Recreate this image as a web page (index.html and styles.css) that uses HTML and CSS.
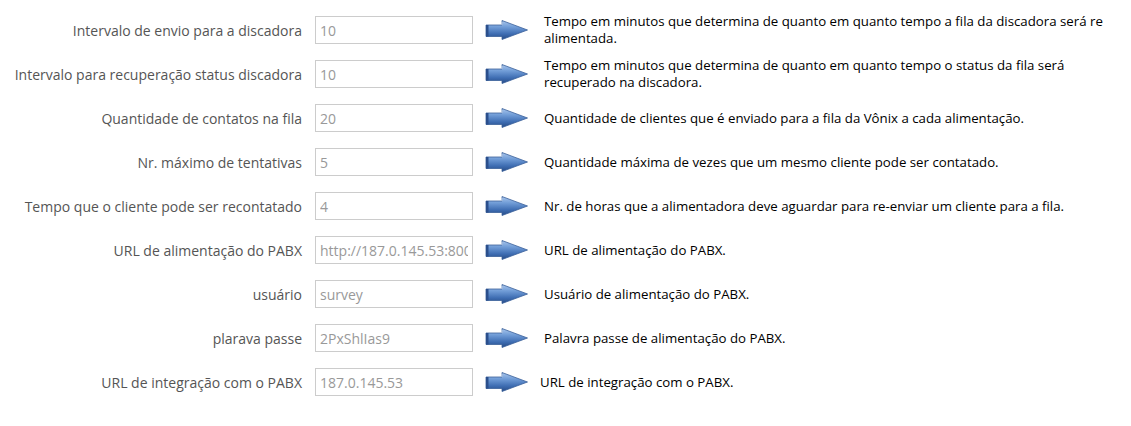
FILE: index.html
```html
<!DOCTYPE html>
<html lang="pt">
<head>
<meta charset="utf-8">
<title>Configuração da discadora</title>
<link rel="stylesheet" href="styles.css">
</head>
<body>
<svg width="0" height="0" class="defs" aria-hidden="true">
  <defs>
    <linearGradient id="ag" x1="0" y1="0" x2="0" y2="1">
      <stop offset="0" stop-color="#a9c6ec"/>
      <stop offset="0.35" stop-color="#6f9bd6"/>
      <stop offset="0.7" stop-color="#3f6eb3"/>
      <stop offset="1" stop-color="#264b86"/>
    </linearGradient>
    <symbol id="arrow" viewBox="0 0 43 20">
      <path d="M1 5 L17 5 L17 0.5 L42.5 10 L17 19.5 L17 16.5 L1 16.5 Z" fill="url(#ag)" stroke="#3a5f99" stroke-width="0.8"/>
      <path d="M1 5 L3.5 5 L3.5 16.5 L1 16.5 Z" fill="#2b4f8c"/>
      <path d="M17 2 L17 5" stroke="#c9dbf3" stroke-width="1"/>
    </symbol>
  </defs>
</svg>
<div class="form">
  <div class="row">
    <label class="lbl">Intervalo de envio para a discadora</label>
    <input class="field" type="text" value="10">
    <svg class="arrow"><use href="#arrow"/></svg>
    <p class="desc">Tempo em minutos que determina de quanto em quanto tempo a fila da discadora será re alimentada.</p>
  </div>
  <div class="row">
    <label class="lbl">Intervalo para recuperação status discadora</label>
    <input class="field" type="text" value="10">
    <svg class="arrow"><use href="#arrow"/></svg>
    <p class="desc">Tempo em minutos que determina de quanto em quanto tempo o status da fila será recuperado na discadora.</p>
  </div>
  <div class="row">
    <label class="lbl">Quantidade de contatos na fila</label>
    <input class="field" type="text" value="20">
    <svg class="arrow"><use href="#arrow"/></svg>
    <p class="desc">Quantidade de clientes que é enviado para a fila da Vônix a cada alimentação.</p>
  </div>
  <div class="row">
    <label class="lbl">Nr. máximo de tentativas</label>
    <input class="field" type="text" value="5">
    <svg class="arrow"><use href="#arrow"/></svg>
    <p class="desc">Quantidade máxima de vezes que um mesmo cliente pode ser contatado.</p>
  </div>
  <div class="row">
    <label class="lbl">Tempo que o cliente pode ser recontatado</label>
    <input class="field" type="text" value="4">
    <svg class="arrow"><use href="#arrow"/></svg>
    <p class="desc">Nr. de horas que a alimentadora deve aguardar para re-enviar um cliente para a fila.</p>
  </div>
  <div class="row">
    <label class="lbl">URL de alimentação do PABX</label>
    <input class="field" type="text" value="http://187.0.145.53:8000/">
    <svg class="arrow"><use href="#arrow"/></svg>
    <p class="desc">URL de alimentação do PABX.</p>
  </div>
  <div class="row">
    <label class="lbl">usuário</label>
    <input class="field" type="text" value="survey">
    <svg class="arrow"><use href="#arrow"/></svg>
    <p class="desc">Usuário de alimentação do PABX.</p>
  </div>
  <div class="row">
    <label class="lbl">plarava passe</label>
    <input class="field" type="text" value="2PxShlIas9">
    <svg class="arrow"><use href="#arrow"/></svg>
    <p class="desc">Palavra passe de alimentação do PABX.</p>
  </div>
  <div class="row">
    <label class="lbl">URL de integração com o PABX</label>
    <input class="field" type="text" value="187.0.145.53">
    <svg class="arrow"><use href="#arrow"/></svg>
    <p class="desc desc-last">URL de integração com o PABX.</p>
  </div>
</div>
</body>
</html>
```
FILE: styles.css
```css
html, body {
  background: #ffffff;
}
body {
  margin: 8px;
}
.defs {
  position: absolute;
  width: 0;
  height: 0;
}
.form {
  display: flex;
  flex-direction: column;
  gap: 16px;
  padding-top: 8px;
}
.row {
  display: flex;
  align-items: center;
  height: 28px;
}
.lbl {
  width: 294px;
  flex: none;
  text-align: right;
  font-family: "Open Sans", sans-serif;
  font-size: 14px;
  color: #555555;
  white-space: nowrap;
}
.field {
  flex: none;
  box-sizing: border-box;
  width: 158px;
  height: 28px;
  margin: 0 0 0 13px;
  padding: 0 4px;
  border: 1px solid #cccccc;
  border-radius: 0;
  background: #ffffff;
  font-family: "Open Sans", sans-serif;
  font-size: 14px;
  color: #999999;
  outline: none;
}
.arrow {
  flex: none;
  width: 43px;
  height: 20px;
  margin-left: 12px;
}
.desc {
  flex: none;
  width: 565px;
  margin: 0 0 0 16px;
  font-family: "Open Sans", sans-serif;
  font-size: 13.25px;
  line-height: 17px;
  color: #000000;
}
.desc-last {
  margin-left: 12px;
}
```
